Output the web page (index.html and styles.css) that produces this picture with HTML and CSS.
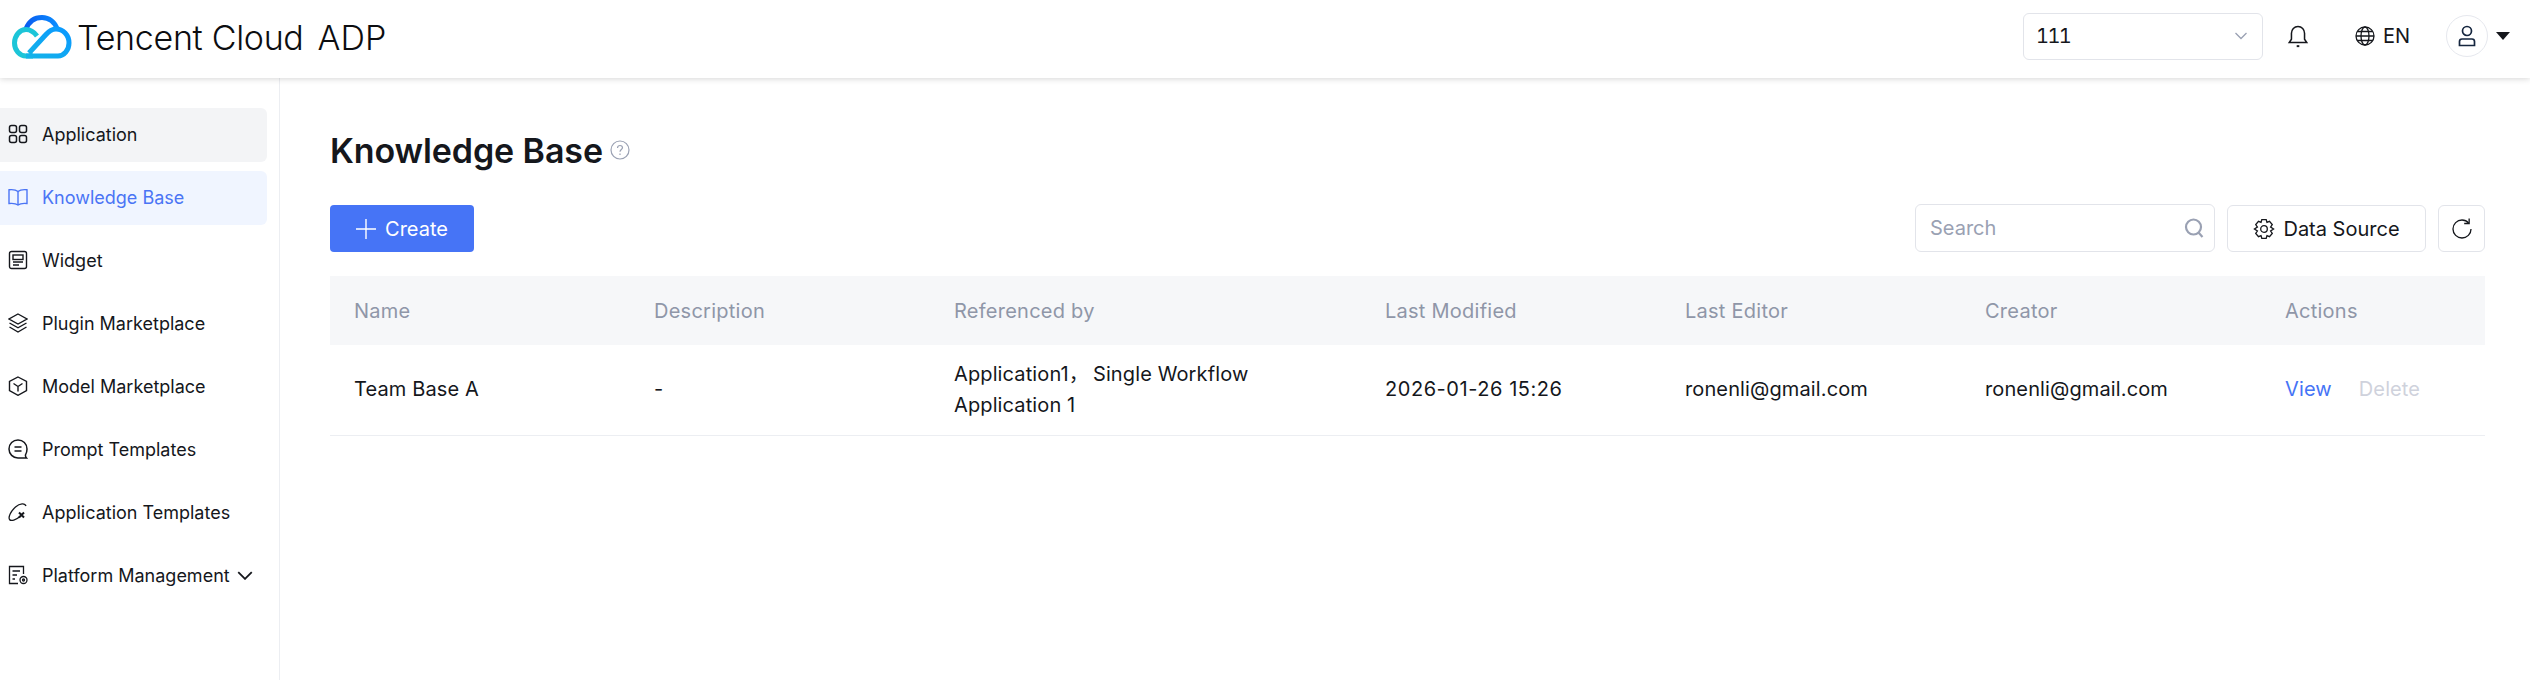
FILE: index.html
```html
<!DOCTYPE html>
<html lang="en">
  <head>
    <meta charset="UTF-8" />
    <meta name="viewport" content="width=device-width, initial-scale=1.0" />
    <title>Knowledge Base</title>
    <link rel="stylesheet" href="styles.css">
  </head>
  <body>
    <header class="topbar">
      <a href="#" class="brand">
        <svg class="brand-logo" viewBox="0 0 60 44" fill="none" stroke-width="5">
          <defs>
            <linearGradient id="logo-top" x1="0" y1="0" x2="1" y2="0">
              <stop offset="0" stop-color="#0a5df0" />
              <stop offset="1" stop-color="#0a8cff" />
            </linearGradient>
            <linearGradient id="logo-right" x1="0" y1="1" x2="1" y2="0">
              <stop offset="0" stop-color="#14b4e8" />
              <stop offset="1" stop-color="#0a98ff" />
            </linearGradient>
          </defs>
          <path d="M14 14C17 6 23 2.500 30 2.500C37 2.500 43 7 45 14" stroke="url(#logo-top)" />
          <path d="M25 21C22 17 18 14.500 14 14.500C7.500 14.500 2.500 21 2.500 28C2.500 35 7.500 41 14 41H21" stroke="#1cc5d8" />
          <path d="M14 41H46C52 41 57 35 57 28C57 20 51 14 44 14C39.500 14 36.500 16.500 33.500 20L17 38" stroke="url(#logo-right)" />
        </svg>
        <span class="brand-name">Tencent Cloud</span>
        <span class="brand-product">ADP</span>
      </a>

      <div class="topbar-right">
        <div class="space-select">
          <span>111</span>
          <svg class="select-arrow" viewBox="0 0 14 14" fill="none" stroke="#9aa1b3" stroke-width="1.300"><path d="M1.500 4L7 9.500L12.500 4" /></svg>
        </div>
        <svg class="bell" viewBox="0 0 20 22" fill="none" stroke="#15171c" stroke-width="1.400">
          <path d="M2 17H18L16 14V8.500C16 5 13.500 2.200 10 2.200C6.500 2.200 4 5 4 8.500V14Z" />
          <path d="M8.800 20.300H11.200" stroke-width="1.800" />
        </svg>
        <div class="lang">
          <svg viewBox="0 0 20 20" fill="none" stroke="#15171c" stroke-width="1.300">
            <circle cx="10" cy="10" r="9" />
            <ellipse cx="10" cy="10" rx="4" ry="9" />
            <path d="M1 10H19M2.300 5.500H17.700M2.300 14.500H17.700" />
          </svg>
          <span>EN</span>
        </div>
        <div class="avatar">
          <svg viewBox="0 0 20 22" fill="none" stroke="#15263f" stroke-width="1.700">
            <circle cx="10" cy="6" r="4.500" />
            <path d="M2.500 20.500V16.500C2.500 15 3.500 14 5 14H15C16.500 14 17.500 15 17.500 16.500V20.500Z" />
          </svg>
        </div>
        <span class="avatar-caret"></span>
      </div>
    </header>

    <div class="page">
      <aside class="sidebar">
        <ul class="side-menu">
          <li class="hovered">
            <svg viewBox="0 0 20 20" fill="none" stroke="currentColor" stroke-width="1.500">
              <rect x="1.500" y="1.500" width="7" height="7" rx="2" />
              <rect x="11.500" y="1.500" width="7" height="7" rx="2" />
              <rect x="1.500" y="11.500" width="7" height="7" rx="2" />
              <rect x="11.500" y="11.500" width="7" height="7" rx="2" />
            </svg>
            Application
          </li>
          <li class="active">
            <svg viewBox="0 0 20 20" fill="none" stroke="currentColor" stroke-width="1.400">
              <path d="M10 4.500C8 2.800 4 2.500 1 2.800V16.500C4 16.200 8 16.500 10 18C12 16.500 16 16.200 19 16.500V2.800C16 2.500 12 2.800 10 4.500Z" />
              <path d="M10 4.500V18" />
            </svg>
            Knowledge Base
          </li>
          <li>
            <svg viewBox="0 0 20 20" fill="none" stroke="currentColor" stroke-width="1.400">
              <rect x="1.500" y="1.500" width="17" height="17" rx="2" />
              <rect x="5" y="5" width="10" height="4.500" />
              <path d="M5 12H15M5 15H11" />
            </svg>
            Widget
          </li>
          <li>
            <svg viewBox="0 0 20 20" fill="none" stroke="currentColor" stroke-width="1.400">
              <path d="M10 1L19 6L10 11L1 6Z" />
              <path d="M1.500 10L10 14.800L18.500 10" />
              <path d="M1.500 14L10 19L18.500 14" />
            </svg>
            Plugin Marketplace
          </li>
          <li>
            <svg viewBox="0 0 20 20" fill="none" stroke="currentColor" stroke-width="1.400">
              <path d="M10 1L18.500 5.500V14.500L10 19.300L1.500 14.500V5.500Z" />
              <path d="M5.500 7.500L10 10.500L14.500 7.500M10 10.500V15.500" />
            </svg>
            Model Marketplace
          </li>
          <li>
            <svg viewBox="0 0 20 20" fill="none" stroke="currentColor" stroke-width="1.500">
              <path d="M10 1C5 1 1 4.800 1 10C1 15 5 19 10 19H18.500C17.500 18 17.300 17 17.500 15.800C18.500 14.300 19 12.300 19 10C19 4.800 15 1 10 1Z" />
              <path d="M6.500 8H13.500M6.500 12H13.500" />
            </svg>
            Prompt Templates
          </li>
          <li>
            <svg viewBox="0 0 20 20" fill="none" stroke="currentColor" stroke-width="1.300">
              <path d="M18 4C17 1 12 1 7.500 5C3 9 0 15 1.500 17.500C3 19.500 8 18 12 14.500" />
              <path d="M11 10.500L16 15.500M16 10.500L11 15.500" stroke-width="2" />
            </svg>
            Application Templates
          </li>
          <li>
            <svg viewBox="0 0 20 20" fill="none" stroke="currentColor" stroke-width="1.300">
              <path d="M10 18.500H1.500V1.500H15.500V9" />
              <path d="M4.500 6H12M4.500 10H9M4.500 14H7" />
              <circle cx="15.500" cy="15" r="3.500" />
              <circle cx="15.500" cy="15" r="1" />
            </svg>
            Platform Management
            <svg class="menu-chevron" viewBox="0 0 14 8" fill="none" stroke="currentColor" stroke-width="1.600"><path d="M1 1L7 7L13 1" /></svg>
          </li>
        </ul>
      </aside>

      <main class="content">
        <div class="page-title">
          <h1>Knowledge Base</h1>
          <svg class="help-icon" viewBox="0 0 20 20" fill="none" stroke="#9aa1b3" stroke-width="1.200">
            <circle cx="10" cy="10" r="9" />
            <path d="M7.500 8C7.500 6.500 8.600 5.500 10 5.500C11.500 5.500 12.500 6.500 12.500 7.800C12.500 9.500 10 9.700 10 11.800" />
            <path d="M10 13.500V15" />
          </svg>
        </div>

        <div class="toolbar">
          <button class="btn-primary">
            <svg viewBox="0 0 20 20" fill="none" stroke="#fff" stroke-width="1.400"><path d="M10 0V20M0 10H20" /></svg>
            Create
          </button>
          <div class="toolbar-right">
            <div class="search-box">
              <span>Search</span>
              <svg viewBox="0 0 20 20" fill="none" stroke="#9aa1b3" stroke-width="2.200"><circle cx="9.500" cy="9" r="7.500" /><path d="M14.500 14.500L18.500 19" /></svg>
            </div>
            <button class="btn-default">
              <svg viewBox="0 0 20 20" fill="none" stroke="#15171c" stroke-width="1.200">
                <path d="M8 1.500H12L12.700 4L15 3L17.500 6L16 8.200L18.700 10L16 11.800L17.500 14L15 17L12.700 16L12 18.500H8L7.300 16L5 17L2.500 14L4 11.800L1.300 10L4 8.200L2.500 6L5 3L7.300 4Z" />
                <circle cx="10" cy="10" r="3" />
              </svg>
              Data Source
            </button>
            <button class="btn-icon">
              <svg viewBox="0 0 20 20" fill="none" stroke="#15171c" stroke-width="1.200">
                <path d="M16 4.500C14.500 2.800 12.400 1.800 10 1.800C5.500 1.800 1.800 5.500 1.800 10C1.800 14.500 5.500 18.200 10 18.200C14.500 18.200 18.200 14.500 18.200 10" />
                <path d="M16.500 0.500V5H12" />
              </svg>
            </button>
          </div>
        </div>

        <table class="kb-table">
          <colgroup>
            <col class="col-std" />
            <col class="col-std" />
            <col class="col-wide" />
            <col class="col-std" />
            <col class="col-std" />
            <col class="col-std" />
            <col class="col-actions" />
          </colgroup>
          <thead>
            <tr>
              <th>Name</th>
              <th>Description</th>
              <th>Referenced by</th>
              <th>Last Modified</th>
              <th>Last Editor</th>
              <th>Creator</th>
              <th>Actions</th>
            </tr>
          </thead>
          <tbody>
            <tr>
              <td>Team Base A</td>
              <td>-</td>
              <td>Application1，<span class="ref-item">Single Workflow</span><br>Application 1</td>
              <td class="cell-date">2026-01-26 15:26</td>
              <td>ronenli@gmail.com</td>
              <td>ronenli@gmail.com</td>
              <td class="row-actions"><a href="#">View</a><a href="#" class="disabled">Delete</a></td>
            </tr>
          </tbody>
        </table>
      </main>
    </div>
  </body>
</html>
```

FILE: styles.css
```css
* {
  margin: 0;
  padding: 0;
  box-sizing: border-box;
  font-family: Inter, "Noto Sans CJK SC", sans-serif;
}

html,
body {
  height: 100%;
  overflow: hidden;
}

body {
  background-color: #fff;
  color: #15171c;
  font-size: 20px;
  display: flex;
  flex-direction: column;
}

/* Top bar */
.topbar {
  height: 78px;
  flex-shrink: 0;
  display: flex;
  justify-content: space-between;
  align-items: center;
  padding: 0 20px 0 12px;
  background-color: #fff;
  box-shadow: 0 1px 6px rgba(0, 0, 0, 0.16);
  position: relative;
}

.brand {
  display: flex;
  align-items: center;
  color: #0c0d10;
  text-decoration: none;
  font-size: 34px;
  font-weight: 350;
  margin-top: -4px;
}

.brand-logo {
  width: 60px;
  height: 44px;
  margin-right: 5px;
}

.brand-name {
  letter-spacing: -0.3px;
}

.brand-product {
  margin-left: 14px;
}

.topbar-right {
  display: flex;
  align-items: center;
  margin-top: -6px;
}

.space-select {
  width: 240px;
  height: 47px;
  display: flex;
  justify-content: space-between;
  align-items: center;
  padding: 0 14px 0 12px;
  border: 1px solid #e2e4ea;
  border-radius: 6px;
  font-variant-numeric: tabular-nums;
  letter-spacing: -1.5px;
}

.select-arrow {
  width: 14px;
  height: 14px;
}

.bell {
  width: 22px;
  height: 24px;
  margin-left: 24px;
}

.lang {
  display: flex;
  align-items: center;
  gap: 8px;
  margin-left: 46px;
}

.lang svg {
  width: 20px;
  height: 20px;
}

.avatar {
  width: 42px;
  height: 42px;
  margin-left: 36px;
  display: flex;
  justify-content: center;
  align-items: center;
  border: 1px solid #e6e8ee;
  border-radius: 50%;
}

.avatar svg {
  width: 20px;
  height: 22px;
}

.avatar-caret {
  width: 0;
  height: 0;
  margin-left: 8px;
  border-left: 7px solid transparent;
  border-right: 7px solid transparent;
  border-top: 8px solid #15171c;
}

/* Sidebar */
.page {
  flex: 1;
  display: flex;
  min-height: 0;
}

.sidebar {
  width: 280px;
  flex-shrink: 0;
  padding: 30px 12px 0 0;
  border-right: 1px solid #eceef2;
}

.side-menu {
  list-style: none;
  display: flex;
  flex-direction: column;
  gap: 9px;
  font-size: 18px;
}

.side-menu li {
  height: 54px;
  display: flex;
  align-items: center;
  gap: 14px;
  padding-left: 8px;
  padding-bottom: 2px;
  border-radius: 0 6px 6px 0;
}

.side-menu li svg {
  width: 20px;
  height: 20px;
  flex-shrink: 0;
}

.side-menu li .menu-chevron {
  width: 16px;
  height: 9px;
  margin-left: -7px;
}

.side-menu .hovered {
  background-color: #f3f4f6;
}

.side-menu .active {
  background-color: #f0f5ff;
  color: #4a74f5;
}

/* Main content */
.content {
  flex: 1;
  padding: 0 45px 0 50px;
  min-width: 0;
}

.page-title {
  display: flex;
  align-items: center;
  gap: 7px;
  height: 48px;
  margin-top: 48px;
}

.page-title h1 {
  font-size: 34px;
  font-weight: 600;
  letter-spacing: -0.1px;
}

.help-icon {
  width: 20px;
  height: 20px;
}

.toolbar {
  display: flex;
  justify-content: space-between;
  align-items: flex-end;
  margin-top: 30px;
}

.toolbar-right {
  display: flex;
  align-items: flex-end;
  gap: 12px;
}

button {
  font-size: 20px;
  cursor: pointer;
}

.btn-primary {
  width: 144px;
  height: 47px;
  display: flex;
  justify-content: center;
  align-items: center;
  gap: 9px;
  background-color: #4674f6;
  color: #fff;
  border: none;
  border-radius: 4px;
}

.btn-primary svg {
  width: 20px;
  height: 20px;
}

.search-box {
  width: 300px;
  height: 48px;
  display: flex;
  justify-content: space-between;
  align-items: center;
  padding: 0 10px 0 14px;
  color: #9aa1b3;
  border: 1px solid #e2e4ea;
  border-radius: 6px;
}

.search-box svg {
  width: 20px;
  height: 20px;
}

.btn-default {
  width: 199px;
  height: 47px;
  display: flex;
  justify-content: center;
  align-items: center;
  gap: 8px;
  background-color: #fff;
  color: #15171c;
  border: 1px solid #e2e4ea;
  border-radius: 6px;
}

.btn-default svg {
  width: 22px;
  height: 22px;
}

.btn-icon {
  width: 47px;
  height: 47px;
  display: flex;
  justify-content: center;
  align-items: center;
  background-color: #fff;
  border: 1px solid #e2e4ea;
  border-radius: 6px;
}

.btn-icon svg {
  width: 22px;
  height: 22px;
}

/* Table */
.kb-table {
  width: 100%;
  margin-top: 24px;
  border-collapse: collapse;
  table-layout: fixed;
}

.col-std {
  width: 300px;
}

.col-wide {
  width: 431px;
}

.kb-table th {
  height: 69px;
  padding: 0 24px;
  text-align: left;
  font-weight: 400;
  color: #8f96a8;
  background-color: #f6f7f9;
  letter-spacing: 0.25px;
}

.kb-table td {
  height: 90px;
  padding: 0 24px;
  line-height: 31px;
  border-bottom: 1px solid #eceef2;
  letter-spacing: 0.12px;
}

.kb-table .cell-date {
  letter-spacing: 0.55px;
}

.ref-item {
  margin-left: 4px;
}

.row-actions a {
  color: #4674f6;
  text-decoration: none;
  margin-right: 27px;
}

.row-actions a.disabled {
  color: #cfd2dc;
}
```
